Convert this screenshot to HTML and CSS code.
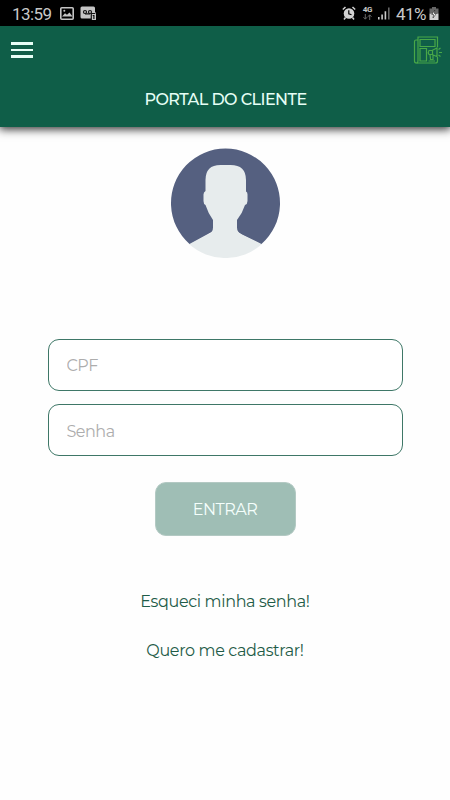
FILE: index.html
```html
<!DOCTYPE html>
<html lang="pt-BR">
<head>
  <meta charset="UTF-8">
  <meta name="viewport" content="width=device-width, initial-scale=1">
  <title>Portal do Cliente</title>
  <link rel="stylesheet" href="styles.css">
</head>
<body>
  <div class="status-bar">
    <div class="status-left">
      <span class="clock">13:59</span>
      <svg class="picture-icon" width="14" height="13" viewBox="0 0 14 13">
        <rect x="0.8" y="0.8" width="12.4" height="11.4" rx="1" fill="none" stroke="#c4c4c4" stroke-width="1.6"/>
        <path d="M2 9.500l3-3.300 2 1.500 2.500-2.200 3 4z" fill="#c4c4c4"/>
        <circle cx="4.3" cy="3.8" r="1" fill="#c4c4c4"/>
      </svg>
      <svg width="17" height="14" viewBox="0 0 17 14">
        <path d="M2 .5h11.500q1.500 0 1.500 1.500V6.500h1V14h-5v-1.500H2q-1.500 0-1.500-1.500V2Q.5.5 2 .5z" fill="#c4c4c4"/>
        <g fill="none" stroke="#111" stroke-width="1.200">
          <circle cx="5" cy="6" r="1.500"/>
          <circle cx="10" cy="6" r="1.500"/>
          <path d="M5 7.800H10M11.300 14V7.500h4M12.700 9.500h1.200V13"/>
        </g>
      </svg>
    </div>
    <div class="status-right">
      <svg class="alarm-icon" width="14" height="14" viewBox="0 0 14 14">
        <circle cx="7" cy="7.500" r="5.300" fill="#d2d2d2"/>
        <path d="M.8 3.500L3.500 1M13.200 3.500L10.500 1M3.500 11.500l-1.500 2M10.500 11.500l1.500 2" stroke="#d2d2d2" stroke-width="1.500"/>
        <path d="M6.800 4.200v3.600l2.700 1" fill="none" stroke="#000" stroke-width="1.200"/>
      </svg>
      <div class="network">
        <span>4G</span>
        <svg width="9" height="6" viewBox="0 0 9 6">
          <path d="M2.300 0v5M.5 3.200l1.800 2 1.800-2M6.700 6V1M4.900 2.800l1.800-2 1.800 2" fill="none" stroke="#666" stroke-width="1"/>
        </svg>
      </div>
      <svg class="signal-icon" width="12" height="13" viewBox="0 0 12 13">
        <path d="M0 10h1.600v2.500H0zM3.300 7.500h1.600v5H3.300zM6.600 4.200h1.600v8.300H6.600z" fill="#c8c8c8"/>
        <path d="M10 .5h1.600v12H10z" fill="#666"/>
      </svg>
      <span class="battery-text">41%</span>
      <svg width="10" height="13" viewBox="0 0 10 13">
        <path d="M3 0h4v1.500h2.500v5h-9v-5H3z" fill="#666"/>
        <path d="M.5 6.500h9V13h-9z" fill="#d0d0d0"/>
        <path d="M5.800 3L2.800 7.500h1.900L4 11l3.300-4.500H5.300z" fill="#fff" stroke="#222" stroke-width=".6"/>
      </svg>
    </div>
  </div>

  <header class="header">
    <div class="toolbar">
      <button class="menu-button" aria-label="Menu">
        <span></span>
        <span></span>
        <span></span>
      </button>
      <svg width="29" height="29" viewBox="0 0 29 29" fill="none" stroke="#49a748" stroke-width="1.200">
        <path d="M5 4H3Q1.500 4 1.500 5.500v19.500Q1.500 27 3.500 27H22.500Q24.500 27 24.500 25V21"/>
        <path d="M24.500 11V1H5V24.500Q5 27 3.500 27"/>
        <path d="M7 3.500h15v7H7zM7 12.500h6.500v12.500H7zM15.500 25H22"/>
        <path d="M16 14.500h3l5-2.500v8.500l-5-2H16q-1.500-2 0-4zM17 18.500l.5 5h2.500v-4.500M19.500 14.500v4"/>
        <path d="M25.500 13.500l2-1.500M26 16.500H29M25.500 19l2 1.500"/>
      </svg>
    </div>
    <h1>PORTAL DO CLIENTE</h1>
  </header>

  <main class="login">
    <svg class="avatar" width="111" height="110" viewBox="0 0 111 110">
      <path fill="#e7eced" d="M19 96A54.500 54.500 0 0 0 92 96L73 86.500H38Z"/>
      <path fill="#556080" d="M19.500 96A54.500 54.500 0 1 1 91.500 96L72 86.500Q62 80 49 80Z"/>
      <path fill="#e7eced" d="M35.500 43V32Q35.500 17 50.500 17H60.500Q76 17 76 32V43.500Q77.500 44 77.500 46.500V53Q77.500 56 75 57Q72.500 65 67 72V79.500Q67 84 71.500 86.500L91.500 96.500H19.500L38.500 86.500Q43 84 43 79.500V72Q38 65 35.500 57Q33.500 56 33.500 53V46.500Q33.500 44 35.500 43Z"/>
    </svg>

    <form class="login-form">
      <input type="text" class="field cpf" placeholder="CPF">
      <input type="password" class="field senha" placeholder="Senha">
      <button type="button" class="enter-button">ENTRAR</button>
    </form>

    <a href="#" class="link forgot">Esqueci minha senha!</a>
    <a href="#" class="link register">Quero me cadastrar!</a>
  </main>
</body>
</html>
```
FILE: styles.css
```css
* {
  box-sizing: border-box;
}
body {
  margin: 0;
  background-color: #fefefe;
  font-family: Montserrat, Inter, "Open Sans", sans-serif;
  font-size: 16px;
}
svg {
  display: block;
  flex-shrink: 0;
}

/* Status bar */
.status-bar {
  display: flex;
  justify-content: space-between;
  height: 26px;
  padding: 0 11px 0 12px;
  background-color: #000;
  color: #c8c8c8;
  font-family: Roboto, sans-serif;
}
.status-left, .status-right {
  display: flex;
  align-items: center;
}
.clock {
  width: 48px;
  font-size: 17px;
  line-height: 28px;
  padding-top: 2px;
  letter-spacing: -0.6px;
}
.picture-icon {
  margin-right: 6px;
}
.alarm-icon {
  margin-right: 6px;
}
.network {
  display: flex;
  flex-direction: column;
  align-items: center;
  width: 11px;
  margin-right: 5px;
  font-size: 8px;
  font-weight: bold;
  line-height: 8px;
  letter-spacing: -0.3px;
}
.signal-icon {
  margin-right: 6px;
}
.battery-text {
  width: 33px;
  font-size: 17px;
  line-height: 28px;
  padding-top: 2px;
  letter-spacing: -0.6px;
}

/* Header */
.header {
  height: 101px;
  background-color: #0f5e48;
  box-shadow: 0 1px 9px 1px rgba(0, 0, 0, 0.85);
  color: #e6fff6;
}
.toolbar {
  display: flex;
  justify-content: space-between;
  padding: 10px 8px 0 11px;
}
.menu-button {
  display: flex;
  flex-direction: column;
  gap: 4px;
  width: 22px;
  padding: 6px 0 0;
  border: 0;
  background: none;
}
.menu-button span {
  width: 22px;
  height: 2.5px;
  background-color: #e6fff6;
}
.header h1 {
  margin: 23px 0 0;
  padding-left: 1px;
  font-size: 16px;
  font-weight: 500;
  line-height: 24px;
  letter-spacing: -0.55px;
  text-align: center;
}

/* Login */
.login {
  display: flex;
  flex-direction: column;
  align-items: center;
  padding-top: 21px;
}
.login-form {
  display: flex;
  flex-direction: column;
  align-items: center;
  width: 355px;
  margin-top: 81px;
}
.field {
  width: 355px;
  height: 52px;
  margin-bottom: 13px;
  padding: 0 18px;
  border: 1px solid #3e7767;
  border-radius: 11px;
  background-color: #fff;
  font-family: inherit;
  font-size: 16px;
  font-weight: 400;
  letter-spacing: -0.5px;
}
.senha {
  padding-top: 2px;
}
.field::placeholder {
  color: #adadad;
  opacity: 1;
}
.enter-button {
  width: 141px;
  height: 54px;
  margin-top: 13px;
  padding: 0;
  border: 1px solid #b3c9c3;
  border-radius: 11px;
  background-color: #9fbeb5;
  color: #f5fffc;
  font-family: inherit;
  font-size: 16px;
  font-weight: 400;
  letter-spacing: -0.5px;
}
.link {
  color: #1f5c48;
  line-height: 24px;
  letter-spacing: -0.35px;
  text-decoration: none;
}
.forgot {
  margin-top: 54px;
}
.register {
  margin-top: 25px;
}
```
